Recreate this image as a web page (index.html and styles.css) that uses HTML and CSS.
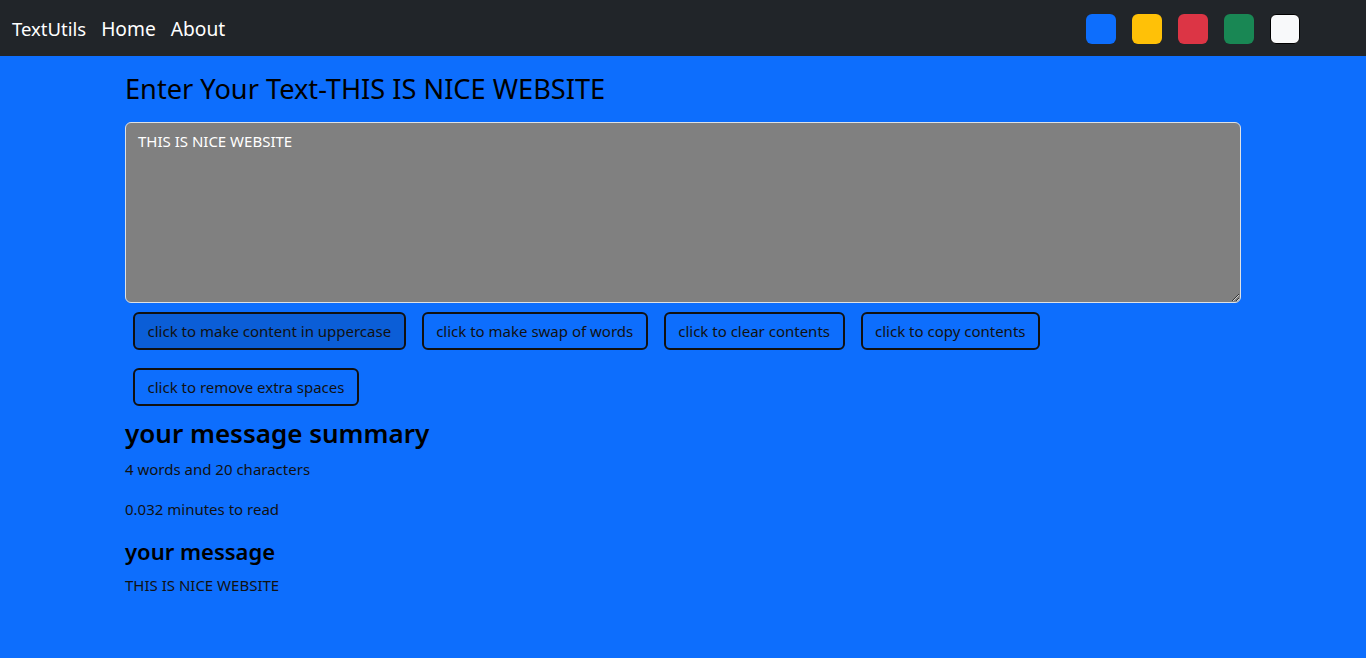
FILE: index.html
```html
<!DOCTYPE html>
<html lang="en">
<head>
<meta charset="utf-8">
<title>TextUtils</title>
<link rel="stylesheet" href="styles.css">
</head>
<body>
<nav class="navbar">
  <div class="nav-left">
    <a class="brand" href="#">TextUtils</a>
    <a class="nav-link" href="#">Home</a>
    <a class="nav-link" href="#">About</a>
  </div>
  <div class="swatches">
    <span class="swatch sw-blue"></span>
    <span class="swatch sw-yellow"></span>
    <span class="swatch sw-red"></span>
    <span class="swatch sw-green"></span>
    <span class="swatch sw-light"></span>
  </div>
</nav>
<main class="container">
  <h1 class="title">Enter Your Text-THIS IS NICE WEBSITE</h1>
  <textarea class="text-input">THIS IS NICE WEBSITE</textarea>
  <div class="buttons">
    <button class="btn btn-active">click to make content in uppercase</button>
    <button class="btn">click to make swap of words</button>
    <button class="btn">click to clear contents</button>
    <button class="btn">click to copy contents</button>
    <button class="btn">click to remove extra spaces</button>
  </div>
  <h2 class="summary-title">your message summary</h2>
  <p class="line">4 words and 20 characters</p>
  <p class="line">0.032 minutes to read</p>
  <h3 class="message-title">your message</h3>
  <p class="line">THIS IS NICE WEBSITE</p>
</main>
</body>
</html>
```
FILE: styles.css
```css
* { box-sizing: border-box; }
html, body { height: 100%; }
body {
  margin: 0;
  background: #0d6efd;
  font-family: "Noto Sans", "Open Sans", sans-serif;
  font-size: 15px;
  line-height: 24px;
  color: #111;
}
.navbar {
  height: 56px;
  background: #212529;
  display: flex;
  align-items: center;
  justify-content: space-between;
  padding: 0 66px 0 12px;
}
.nav-left {
  display: flex;
  align-items: center;
  gap: 15px;
  padding-top: 2px;
}
.brand, .nav-link {
  color: #fff;
  text-decoration: none;
  font-size: 18.5px;
  line-height: 30px;
}
.nav-link { font-size: 19.2px; }
.swatches {
  display: flex;
  gap: 16px;
  margin-top: 2px;
}
.swatch {
  width: 30px;
  height: 30px;
  border-radius: 6px;
  display: block;
}
.sw-blue { background: #0d6efd; }
.sw-yellow { background: #ffc107; }
.sw-red { background: #dc3545; }
.sw-green { background: #198754; }
.sw-light { background: #f8f9fa; border: 1px solid #000; }
.container {
  width: 1116px;
  margin: 0 auto;
  padding-top: 16px;
}
.title {
  margin: 0 0 16px;
  font-size: 27.2px;
  font-weight: 400;
  line-height: 34px;
  color: #000;
}
.text-input {
  display: block;
  width: 100%;
  height: 181px;
  background: #808080;
  color: #fff;
  border: 1px solid #dee2e6;
  border-radius: 6px;
  padding: 6px 12px;
  font-family: inherit;
  font-size: 15px;
  line-height: 24px;
  resize: vertical;
}
.buttons {
  display: flex;
  flex-wrap: wrap;
  column-gap: 16px;
  row-gap: 18px;
  padding-left: 8px;
  margin-top: 9px;
}
.btn {
  height: 38px;
  padding: 0 12.5px;
  background: transparent;
  border: 2px solid #111;
  border-radius: 6px;
  color: #111;
  font-family: inherit;
  font-size: 15px;
}
.btn-active { background: #0b5ed7; }
.summary-title {
  margin: 10px 0 7px;
  font-size: 26px;
  font-weight: 600;
  line-height: 34px;
  color: #000;
}
.line {
  margin: 0 0 16px;
}
.message-title {
  margin: 0 0 7px;
  font-size: 22px;
  font-weight: 600;
  line-height: 29px;
  color: #000;
}
.message-title + .line { margin: 0; }
```
